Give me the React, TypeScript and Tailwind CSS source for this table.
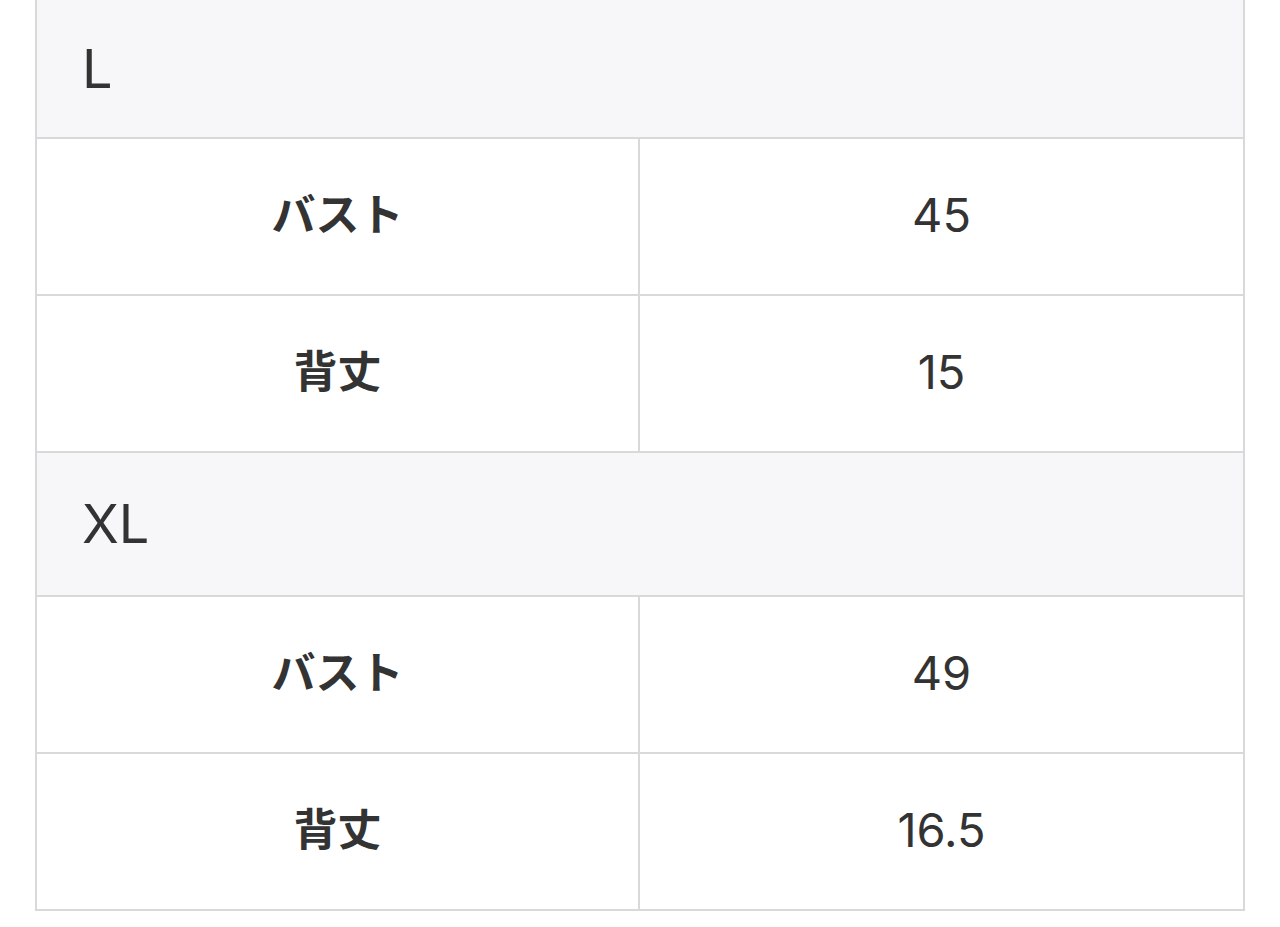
import React from "react";

const font = { fontFamily: 'Inter, "Noto Sans CJK JP", "Noto Sans", sans-serif' };

function Header({ label, h }: { label: string; h: string }) {
  return (
    <div className={`flex items-center bg-[#f7f7f9] border-b-2 border-[#d9d9d9] pl-[45px] text-[54px] leading-none text-[#333333] ${h}`}>
      {label}
    </div>
  );
}

function Row({ k, v }: { k: string; v: string }) {
  return (
    <div className="grid grid-cols-[603px_1fr] h-[157px] border-b-2 border-[#d9d9d9] pb-[4px]">
      <div className="flex items-center justify-center border-r-2 border-[#d9d9d9] text-[44px] leading-none font-bold text-[#333333] mb-[-4px] pb-[4px]">
        {k}
      </div>
      <div className="flex items-center justify-center text-[47px] leading-none text-[#333333]">{v}</div>
    </div>
  );
}

export default function App() {
  return (
    <div className="w-[1280px] h-[927px] bg-white" style={font}>
      <div className="ml-[35px] w-[1210px] border-x-2 border-[#d9d9d9]">
        <Header label="L" h="h-[139px]" />
        <Row k="バスト" v="45" />
        <Row k="背丈" v="15" />
        <Header label="XL" h="h-[144px]" />
        <Row k="バスト" v="49" />
        <Row k="背丈" v="16.5" />
      </div>
    </div>
  );
}
